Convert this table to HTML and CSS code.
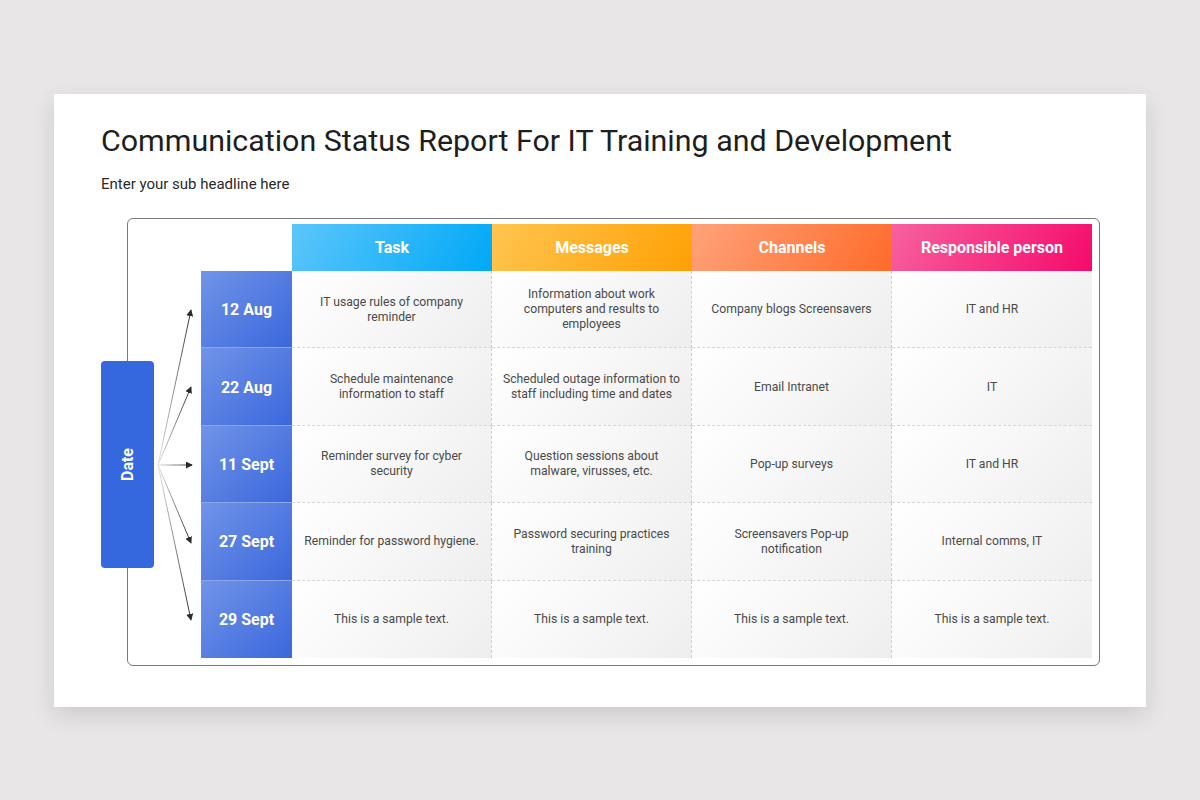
FILE: index.html
```html
<!DOCTYPE html>
<html lang="en">
<head>
<meta charset="utf-8">
<title>Communication Status Report</title>
<link rel="stylesheet" href="styles.css">
</head>
<body>
<div class="slide">
  <h1 class="title">Communication Status Report For IT Training and Development</h1>
  <p class="subtitle">Enter your sub headline here</p>
  <div class="frame">
    <div class="date-box"><span>Date</span></div>
    <div class="table">
      <div class="spacer"></div>
      <div class="head head-task">Task</div>
      <div class="head head-msg">Messages</div>
      <div class="head head-ch">Channels</div>
      <div class="head head-resp">Responsible person</div>
      <svg class="arrows" viewBox="0 0 73 387" width="73" height="387">
        <defs>
          <linearGradient id="fade" gradientUnits="userSpaceOnUse" x1="30" y1="0" x2="64" y2="0">
            <stop offset="0" stop-color="#e4e4e4"/>
            <stop offset="1" stop-color="#2a2a2a"/>
          </linearGradient>
          <marker id="tip" viewBox="0 0 8 8" refX="7" refY="4" markerWidth="7" markerHeight="7" markerUnits="userSpaceOnUse" orient="auto">
            <path d="M0 0 L8 4 L0 8 Z" fill="#2a2a2a"/>
          </marker>
        </defs>
        <g stroke="url(#fade)" stroke-width="1" fill="none">
          <line x1="30" y1="194" x2="63" y2="39" marker-end="url(#tip)"/>
          <line x1="30" y1="194" x2="63" y2="116" marker-end="url(#tip)"/>
          <line x1="30" y1="194" x2="64" y2="194.01" marker-end="url(#tip)"/>
          <line x1="30" y1="194" x2="63" y2="272" marker-end="url(#tip)"/>
          <line x1="30" y1="194" x2="63" y2="349" marker-end="url(#tip)"/>
        </g>
      </svg>

      <div class="date">12 Aug</div>
      <div class="cell">IT usage rules of company reminder</div>
      <div class="cell msg">Information about work computers and results to employees</div>
      <div class="cell">Company blogs Screensavers</div>
      <div class="cell last-col">IT and HR</div>

      <div class="date">22 Aug</div>
      <div class="cell">Schedule maintenance information to staff</div>
      <div class="cell msg">Scheduled outage information to staff including time and dates</div>
      <div class="cell">Email Intranet</div>
      <div class="cell last-col">IT</div>

      <div class="date">11 Sept</div>
      <div class="cell">Reminder survey for cyber security</div>
      <div class="cell msg">Question sessions about malware, virusses, etc.</div>
      <div class="cell">Pop-up surveys</div>
      <div class="cell last-col">IT and HR</div>

      <div class="date">27 Sept</div>
      <div class="cell">Reminder for password hygiene.</div>
      <div class="cell msg">Password securing practices training</div>
      <div class="cell">Screensavers Pop-up notification</div>
      <div class="cell last-col">Internal comms, IT</div>

      <div class="date last-row">29 Sept</div>
      <div class="cell last-row">This is a sample text.</div>
      <div class="cell msg last-row">This is a sample text.</div>
      <div class="cell last-row">This is a sample text.</div>
      <div class="cell last-row last-col">This is a sample text.</div>
    </div>
  </div>
</div>
</body>
</html>
```

FILE: styles.css
```css
* { box-sizing: border-box; }
html, body { margin: 0; padding: 0; }
body {
  width: 1200px;
  height: 800px;
  background: #e8e6e7;
  font-family: Roboto, "Liberation Sans", Arial, sans-serif;
  padding: 94px 54px 0 54px;
}
.slide {
  width: 1092px;
  height: 613px;
  background: #ffffff;
  box-shadow: 0 8px 22px rgba(0, 0, 0, 0.12);
  padding: 29px 0 0 47px;
  display: flex;
  flex-direction: column;
}
.title {
  margin: 0;
  font-size: 30.4px;
  line-height: 36px;
  font-weight: 400;
  color: #1e1e1e;
}
.subtitle {
  margin: 16px 0 0 0;
  font-size: 15px;
  line-height: 18px;
  color: #2a2a2a;
}
.frame {
  position: relative;
  margin: 25px 0 0 26px;
  width: 973px;
  height: 448px;
  border: 1px solid #7a7a7a;
  border-radius: 6px;
  padding: 5px 7px 7px 0;
}
.date-box {
  position: absolute;
  left: -27px;
  top: 142px;
  width: 53px;
  height: 207px;
  background: #3568de;
  border-radius: 4px;
  display: flex;
  align-items: center;
  justify-content: center;
  z-index: 2;
}
.date-box span {
  transform: rotate(-90deg);
  color: #ffffff;
  font-weight: 700;
  font-size: 16px;
  white-space: nowrap;
}
.table {
  display: grid;
  grid-template-columns: 73px 91px repeat(4, 200px);
  grid-template-rows: 47px repeat(5, 77.4px);
}
.spacer { grid-column: 1 / 3; grid-row: 1; }
.head {
  display: flex;
  align-items: center;
  justify-content: center;
  color: #ffffff;
  font-weight: 700;
  font-size: 16px;
}
.head-task { background: linear-gradient(120deg, #5cc6fb 0%, #00a8f6 100%); }
.head-msg { background: linear-gradient(120deg, #ffc550 0%, #ffa004 100%); }
.head-ch { background: linear-gradient(120deg, #ffa27a 0%, #ff6b2a 100%); }
.head-resp { background: linear-gradient(120deg, #f7619f 0%, #f50a6b 100%); }
.arrows {
  grid-column: 1;
  grid-row: 2 / 7;
  display: block;
}
.date {
  grid-column: 2;
  display: flex;
  align-items: center;
  justify-content: center;
  color: #ffffff;
  font-weight: 700;
  font-size: 16px;
  padding-top: 1px;
  background: linear-gradient(135deg, #7194e8 0%, #3a67dc 100%);
  border-bottom: 1px solid #8ca6ea;
}
.date.last-row { border-bottom: none; }
.cell {
  display: flex;
  align-items: center;
  justify-content: center;
  text-align: center;
  padding: 1px 11px 0 11px;
  font-size: 12.2px;
  line-height: 15px;
  color: #4a4a4a;
  background: linear-gradient(135deg, #ffffff 0%, #f8f8f8 45%, #eeeeee 100%);
  border-right: 1px dashed #cfcfcf;
  border-bottom: 1px dashed #d6d6d6;
}
.cell.msg { padding-left: 9px; padding-right: 9px; }
.cell.last-col { border-right: none; }
.cell.last-row { border-bottom: none; }
```
